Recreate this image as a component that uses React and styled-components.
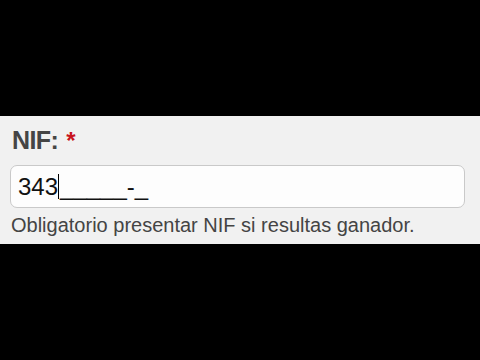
import React from "react";
import styled, { createGlobalStyle } from "styled-components";

const Global = createGlobalStyle`
  html, body { margin: 0; padding: 0; background: #000; }
  body { font-family: "Liberation Sans", Arial, sans-serif; }
`;

const Page = styled.div`
  width: 480px;
  height: 360px;
  background: #000;
  padding-top: 116px;
  box-sizing: border-box;
`;

const Panel = styled.div`
  height: 128px;
  background: #f1f1f1;
  padding: 9px 15px 0 10px;
  box-sizing: border-box;
`;

const Label = styled.div`
  font-size: 25px;
  line-height: 30px;
  font-weight: bold;
  color: #454545;
  padding-left: 2px;
  letter-spacing: -0.6px;
`;

const Req = styled.span`
  color: #c8141e;
  margin-left: 8px;
  font-size: 24px;
`;

const Field = styled.div`
  margin-top: 9px;
  height: 43px;
  box-sizing: border-box;
  border: 1px solid #c9c9c9;
  border-radius: 7px;
  background: #fdfdfd;
  padding-left: 7px;
  display: flex;
  align-items: center;
  font-size: 24px;
  color: #111;
  white-space: pre;
`;

const Caret = styled.span`
  display: inline-block;
  width: 1px;
  height: 25px;
  background: #000;
  margin: 0 1px 0 0;
`;

const Help = styled.div`
  margin-top: 5px;
  font-size: 20px;
  line-height: 24px;
  color: #444;
  padding-left: 1px;
`;

export default function App() {
  return (
    <>
      <Global />
      <Page>
        <Panel>
          <Label>
            NIF:<Req>*</Req>
          </Label>
          <Field>
            <span>343</span>
            <Caret />
            <span>_____-_</span>
          </Field>
          <Help>Obligatorio presentar NIF si resultas ganador.</Help>
        </Panel>
      </Page>
    </>
  );
}
